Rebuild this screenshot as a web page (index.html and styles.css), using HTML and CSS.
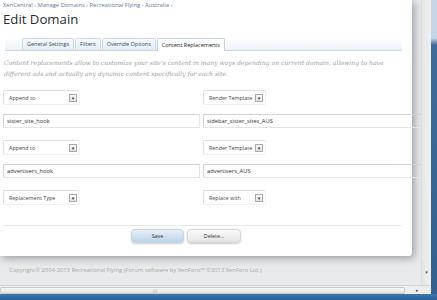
FILE: index.html
```html
<!DOCTYPE html>
<html lang="en">
<head>
    <meta charset="UTF-8">
    <title>Edit Domain - XenCentral</title>
    <link rel="stylesheet" href="styles.css">
</head>
<body>
    <div class="screen">
        <div class="viewport">
            <div class="panel">
                <div class="breadcrumb">
                    <a href="#">XenCentral</a> &rsaquo;
                    <a href="#">Manage Domains</a> &rsaquo;
                    <a href="#">Recreational Flying - Australia</a> &rsaquo;
                </div>
                <h1>Edit Domain</h1>

                <div class="tabbar">
                    <span class="tab">General Settings</span>
                    <span class="tab">Filters</span>
                    <span class="tab">Override Options</span>
                    <span class="tab active">Content Replacements</span>
                </div>

                <p class="explain">Content replacements allow to customize your site's content in many ways depending on current domain, allowing to have different ads and actually any dynamic content specifically for each site.</p>

                <!-- replacement 1 -->
                <div class="row selects">
                    <div class="select wide"><span>Append to</span><i>&#9662;</i></div>
                    <div class="select"><span>Render Template</span><i>&#9662;</i></div>
                </div>
                <div class="row inputs">
                    <div class="input">sister_site_hook</div>
                    <div class="input long">sidebar_sister_sites_AUS</div>
                </div>

                <!-- replacement 2 -->
                <div class="row selects">
                    <div class="select wide"><span>Append to</span><i>&#9662;</i></div>
                    <div class="select"><span>Render Template</span><i>&#9662;</i></div>
                </div>
                <div class="row inputs">
                    <div class="input">advertisers_hook</div>
                    <div class="input long">advertisers_AUS</div>
                </div>

                <!-- new replacement -->
                <div class="row selects last">
                    <div class="select wide"><span>Replacement Type</span><i>&#9662;</i></div>
                    <div class="select"><span>Replace with</span><i>&#9662;</i></div>
                </div>

                <div class="submit">
                    <button class="primary">Save</button>
                    <button>Delete...</button>
                </div>
            </div>
            <p class="copyright">Copyright&copy; 2004-2013 Recreational Flying (Forum software by XenForo&trade; &copy;2013 XenForo Ltd.)</p>
        </div>
        <div class="vscroll"><span class="arrow">&#9662;</span></div>
        <div class="frame-right"></div>
        <div class="hscroll">
            <div class="thumb"><span>|||</span></div>
            <span class="arrow">&#9656;</span>
        </div>
        <div class="frame-bottom"></div>
    </div>
</body>
</html>
```

FILE: styles.css
```css
body {
    margin: 0;
    padding: 0;
    font-family: "Open Sans", "DejaVu Sans", sans-serif;
    color: #333333;
}
.screen {
    width: 437px;
    height: 300px;
    overflow: hidden;
    display: grid;
    grid-template-columns: 421px 10px 6px;
    grid-template-rows: 285px 9px 6px;
}
.viewport {
    background-color: #e9eaec;
    overflow: hidden;
}
.panel {
    width: 409px;
    height: 256px;
    padding-left: 3px;
    background-color: #ffffff;
    box-shadow: 2px 2px 8px rgba(40, 50, 60, 0.45);
    border-radius: 0 0 3px 0;
}
.breadcrumb {
    height: 10px;
    line-height: 11px;
    font-size: 5.8px;
    color: #6a85a0;
}
.breadcrumb a {
    color: #5c7a99;
    text-decoration: none;
}
h1 {
    margin: 0;
    height: 18px;
    line-height: 18px;
    font-size: 13.2px;
    font-weight: normal;
    color: #2c2c2c;
    border-bottom: 1px solid transparent;
}
.tabbar {
    margin: 8px 10px 0 2px;
    height: 13px;
    padding-left: 17px;
    display: flex;
    align-items: flex-end;
    background: linear-gradient(to bottom, #ffffff, #edf3f8);
    border-bottom: 1px solid #c8d7e4;
}
.tab {
    height: 11px;
    line-height: 11px;
    padding: 0 4px;
    margin-right: 1px;
    font-size: 5.5px;
    color: #2f4a63;
    white-space: nowrap;
    background: linear-gradient(to bottom, #f7fafc, #e4edf5);
    border: 1px solid #cfdce8;
    border-bottom: none;
    border-radius: 2px 2px 0 0;
}
.tab.active {
    height: 12px;
    line-height: 13px;
    margin-bottom: -1px;
    background: #ffffff;
    color: #222222;
    border-color: #c2d2e0;
}
.explain {
    margin: 6px 0 0 1px;
    width: 400px;
    font-family: "DejaVu Serif", "Liberation Serif", serif;
    font-style: italic;
    font-size: 6.1px;
    line-height: 11px;
    color: #a0a0a0;
}
.row {
    display: grid;
    grid-template-columns: 197px 220px;
    column-gap: 3px;
}
.row.selects {
    margin-top: 11px;
    height: 15px;
}
.row.inputs {
    margin-top: 9px;
    height: 14px;
}
.row.inputs + .row.selects {
    margin-top: 12px;
}
.select {
    width: 63px;
    height: 15px;
    box-sizing: border-box;
    padding: 0 2px 0 5px;
    display: flex;
    align-items: center;
    justify-content: space-between;
    font-size: 5.4px;
    color: #444444;
    white-space: nowrap;
    border: 1px solid #dedede;
    border-right-color: #f0f0f0;
    border-bottom-color: #f0f0f0;
    border-radius: 2px;
}
.select.wide {
    width: 77px;
}
.select i {
    flex: none;
    width: 6px;
    height: 6px;
    line-height: 6px;
    text-align: center;
    font-style: normal;
    font-size: 5px;
    color: #333333;
    background: linear-gradient(to bottom, #fafafa, #e2e2e2);
    border: 1px solid #a9a9a9;
}
.input {
    height: 14px;
    box-sizing: border-box;
    padding-left: 3px;
    line-height: 13px;
    font-size: 5.8px;
    color: #333333;
    border: 1px solid #e4e4e4;
    border-top-color: #d2d2d2;
    border-left-color: #d8d8d8;
    white-space: nowrap;
}
.submit {
    margin: 20px 10px 0 0;
    padding: 3px 0 0 128px;
    border-top: 1px solid #e8e8e8;
    display: flex;
    gap: 3px;
}
button {
    width: 54px;
    height: 14px;
    padding: 0;
    font-family: "Open Sans", "DejaVu Sans", sans-serif;
    font-size: 5.4px;
    color: #333333;
    border: 1px solid #d6d6d6;
    border-radius: 4px;
    background: linear-gradient(to bottom, #fbfbfb, #e4e4e4);
    box-shadow: 0 1px 2px rgba(0, 0, 0, 0.2);
}
button.primary {
    width: 53px;
    border-color: #c4d6e8;
    background: linear-gradient(to bottom, #e7f0f8, #bdd3e8);
}
.copyright {
    margin: 10px 0 0 9px;
    font-size: 5.8px;
    line-height: 8px;
    color: #a7a9ab;
    white-space: nowrap;
}
.vscroll {
    grid-row: 1;
    grid-column: 2;
    background: linear-gradient(to right, #e6e7e8, #f0f0f0);
    border-left: 1px solid #dcdcdc;
    display: flex;
    align-items: flex-end;
    justify-content: center;
    padding-bottom: 10px;
}
.vscroll .arrow,
.hscroll .arrow {
    font-size: 5px;
    line-height: 6px;
    color: #555555;
}
.frame-right {
    grid-row: 1 / 3;
    grid-column: 3;
    background: linear-gradient(to bottom, #c6d6e6 0, #c6d6e6 38px, #3f6a99 45px, #34608f 100%);
}
.hscroll {
    grid-row: 2;
    grid-column: 1 / 3;
    display: flex;
    align-items: center;
    background: #eeeeee;
    border-top: 1px solid #d4d4d4;
}
.hscroll .thumb {
    width: 405px;
    height: 7px;
    box-sizing: border-box;
    display: flex;
    justify-content: center;
    align-items: center;
    background: linear-gradient(to bottom, #f7f7f7, #e2e2e2);
    border: 1px solid #cbcbcb;
    border-radius: 2px;
}
.hscroll .thumb span {
    font-size: 4px;
    letter-spacing: -0.5px;
    color: #777777;
    margin-right: 96px;
}
.hscroll .arrow {
    margin-left: 11px;
}
.frame-bottom {
    grid-row: 3;
    grid-column: 1 / 4;
    background: linear-gradient(to bottom, #3b78b0, #2c5f94);
}
```
